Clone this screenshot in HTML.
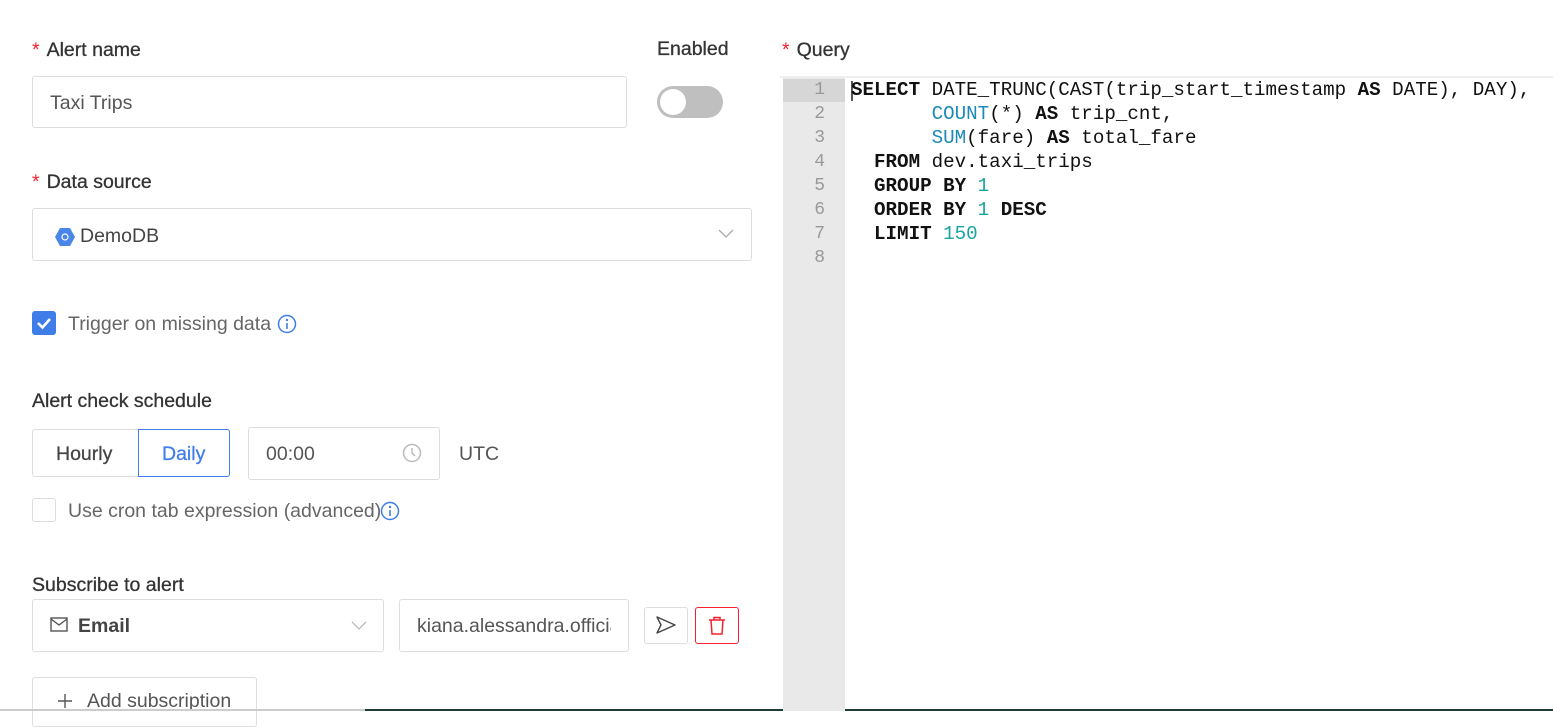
<!DOCTYPE html>
<html><head><meta charset="utf-8">
<style>
*{box-sizing:border-box;margin:0;padding:0}
body{width:1553px;height:711px;overflow:hidden;background:#fff;font-family:"Liberation Sans",sans-serif;color:#333;position:relative}
.abs{position:absolute}
.lbl{font-size:19.5px;color:#333;-webkit-text-stroke:0.3px #333}
.req{color:#f5222d;margin-right:7px;-webkit-text-stroke:0}
.box{position:absolute;border:1px solid #ddd;border-radius:3px;background:#fff}
.txt{font-size:19.5px;color:#555}
.code{position:absolute;left:851px;top:78px;font-family:"Liberation Mono",monospace;font-size:19.2px;line-height:24px;white-space:pre;color:#111}
.k{font-weight:bold}
.b{color:#1a8bb8}
.n{color:#1aa3a3}
.gut{position:absolute;left:783px;top:78px;width:62px;height:633px;background:#e9e9e9}
.ln{position:absolute;left:783px;width:42px;text-align:right;font-family:"Liberation Mono",monospace;font-size:18px;color:#999}
</style></head><body>
<div class="abs lbl" style="left:32px;top:39px"><span class="req">*</span>Alert name</div>
<div class="abs lbl" style="left:657px;top:38px">Enabled</div>
<div class="box" style="left:32px;top:76px;width:595px;height:52px"></div>
<div class="abs txt" style="left:50px;top:92px">Taxi Trips</div>
<div class="abs" style="left:657px;top:86px;width:66px;height:32px;border-radius:16px;background:#bfbfbf"></div>
<div class="abs" style="left:660px;top:89px;width:26px;height:26px;border-radius:13px;background:#fff"></div>

<div class="abs lbl" style="left:32px;top:171px"><span class="req">*</span>Data source</div>
<div class="box" style="left:32px;top:208px;width:720px;height:53px"></div>
<svg class="abs" style="left:55px;top:228px" width="20" height="18" viewBox="0 0 20 18"><polygon points="5,0 15,0 20,9 15,18 5,18 0,9" fill="#4a86e8"/><circle cx="10" cy="9" r="3" fill="none" stroke="#fff" stroke-width="1.2"/></svg>
<div class="abs txt" style="left:80px;top:225px;color:#444">DemoDB</div>
<svg class="abs" style="left:718px;top:229px" width="16" height="10"><path d="M1 1 L8 8 L15 1" fill="none" stroke="#aaa" stroke-width="1.3"/></svg>

<div class="abs" style="left:32px;top:311px;width:24px;height:24px;border-radius:3px;background:#3f7ee8"></div>
<svg class="abs" style="left:32px;top:311px" width="24" height="24"><path d="M6 12 L10.5 16.5 L18 8" fill="none" stroke="#fff" stroke-width="2.6"/></svg>
<div class="abs txt" style="left:68px;top:313px;color:#666">Trigger on missing data</div>
<svg class="abs" style="left:277px;top:314px" width="20" height="20"><circle cx="10" cy="10" r="8.5" fill="none" stroke="#3f7ee8" stroke-width="1.5"/><circle cx="10" cy="6" r="1.2" fill="#3f7ee8"/><path d="M10 9 V15" stroke="#3f7ee8" stroke-width="1.6"/></svg>

<div class="abs lbl" style="left:32px;top:390px">Alert check schedule</div>
<div class="box" style="left:32px;top:429px;width:198px;height:48px"></div>
<div class="abs" style="left:138px;top:429px;width:92px;height:48px;border:1px solid #3f7ee8;border-radius:0 3px 3px 0"></div>
<div class="abs txt" style="left:56px;top:443px;color:#444;-webkit-text-stroke:0.3px #444">Hourly</div>
<div class="abs txt" style="left:162px;top:443px;color:#3f7ee8;-webkit-text-stroke:0.3px #3f7ee8">Daily</div>
<div class="box" style="left:248px;top:427px;width:192px;height:53px"></div>
<div class="abs txt" style="left:266px;top:443px;color:#555">00:00</div>
<svg class="abs" style="left:402px;top:443px" width="20" height="20"><circle cx="10" cy="10" r="8.5" fill="none" stroke="#bbb" stroke-width="1.5"/><path d="M10 5 V10 L13 13" fill="none" stroke="#bbb" stroke-width="1.5"/></svg>
<div class="abs txt" style="left:459px;top:443px;color:#555">UTC</div>
<div class="abs" style="left:32px;top:498px;width:24px;height:24px;border:1px solid #ddd;border-radius:3px"></div>
<div class="abs txt" style="left:68px;top:500px;color:#666">Use cron tab expression (advanced)</div>
<svg class="abs" style="left:380px;top:501px" width="20" height="20"><circle cx="10" cy="10" r="8.5" fill="none" stroke="#3f7ee8" stroke-width="1.5"/><circle cx="10" cy="6" r="1.2" fill="#3f7ee8"/><path d="M10 9 V15" stroke="#3f7ee8" stroke-width="1.6"/></svg>

<div class="abs lbl" style="left:32px;top:574px">Subscribe to alert</div>
<div class="box" style="left:32px;top:599px;width:352px;height:53px"></div>
<svg class="abs" style="left:50px;top:617px" width="18" height="15"><rect x="1" y="1" width="16" height="13" fill="none" stroke="#555" stroke-width="1.4"/><path d="M1 2 L9 8 L17 2" fill="none" stroke="#555" stroke-width="1.4"/></svg>
<div class="abs txt" style="left:78px;top:615px;color:#444;font-weight:bold">Email</div>
<svg class="abs" style="left:351px;top:621px" width="16" height="10"><path d="M1 1 L8 8 L15 1" fill="none" stroke="#bbb" stroke-width="1.3"/></svg>
<div class="box" style="left:399px;top:599px;width:230px;height:53px"></div>
<div class="abs txt" style="left:417px;top:615px;width:194px;overflow:hidden;white-space:nowrap;color:#555">kiana.alessandra.official</div>
<div class="box" style="left:644px;top:607px;width:44px;height:37px"></div>
<svg class="abs" style="left:655px;top:615px" width="22" height="20"><path d="M2 2 L20 10 L2 18 L6 10 Z" fill="none" stroke="#444" stroke-width="1.4" stroke-linejoin="round"/></svg>
<div class="abs" style="left:695px;top:607px;width:44px;height:37px;border:1px solid #f5222d;border-radius:3px"></div>
<svg class="abs" style="left:708px;top:616px" width="18" height="20"><path d="M1 4 H17 M6 4 V1.5 H12 V4 M3 4 L4 18 H14 L15 4" fill="none" stroke="#f5222d" stroke-width="1.5"/></svg>
<div class="box" style="left:32px;top:677px;width:225px;height:50px"></div>
<svg class="abs" style="left:57px;top:693px" width="16" height="16"><path d="M8 1 V15 M1 8 H15" stroke="#555" stroke-width="1.4"/></svg>
<div class="abs txt" style="left:87px;top:690px;color:#555">Add subscription</div>
<div class="abs" style="left:0;top:709px;width:365px;height:2px;background:#ccc"></div>
<div class="abs" style="left:365px;top:709px;width:1188px;height:2px;background:#1f3a3a"></div>

<div class="abs lbl" style="left:782px;top:39px"><span class="req">*</span>Query</div>
<div class="abs" style="left:780px;top:76px;width:773px;height:2px;background:#eee"></div>
<div class="gut"></div>
<div class="abs" style="left:783px;top:79px;width:62px;height:23px;background:#d6d6d6"></div>
<div class="abs" style="left:851px;top:81px;width:2px;height:20px;background:#555"></div>
<div class="ln" style="top:78px;line-height:24px">1<br>2<br>3<br>4<br>5<br>6<br>7<br>8</div>
<div class="code"><span class="k">SELECT</span> DATE_TRUNC(CAST(trip_start_timestamp <span class="k">AS</span> DATE), DAY),
       <span class="b">COUNT</span>(*) <span class="k">AS</span> trip_cnt,
       <span class="b">SUM</span>(fare) <span class="k">AS</span> total_fare
  <span class="k">FROM</span> dev.taxi_trips
  <span class="k">GROUP BY</span> <span class="n">1</span>
  <span class="k">ORDER BY</span> <span class="n">1</span> <span class="k">DESC</span>
  <span class="k">LIMIT</span> <span class="n">150</span>
</div>
</body></html>
